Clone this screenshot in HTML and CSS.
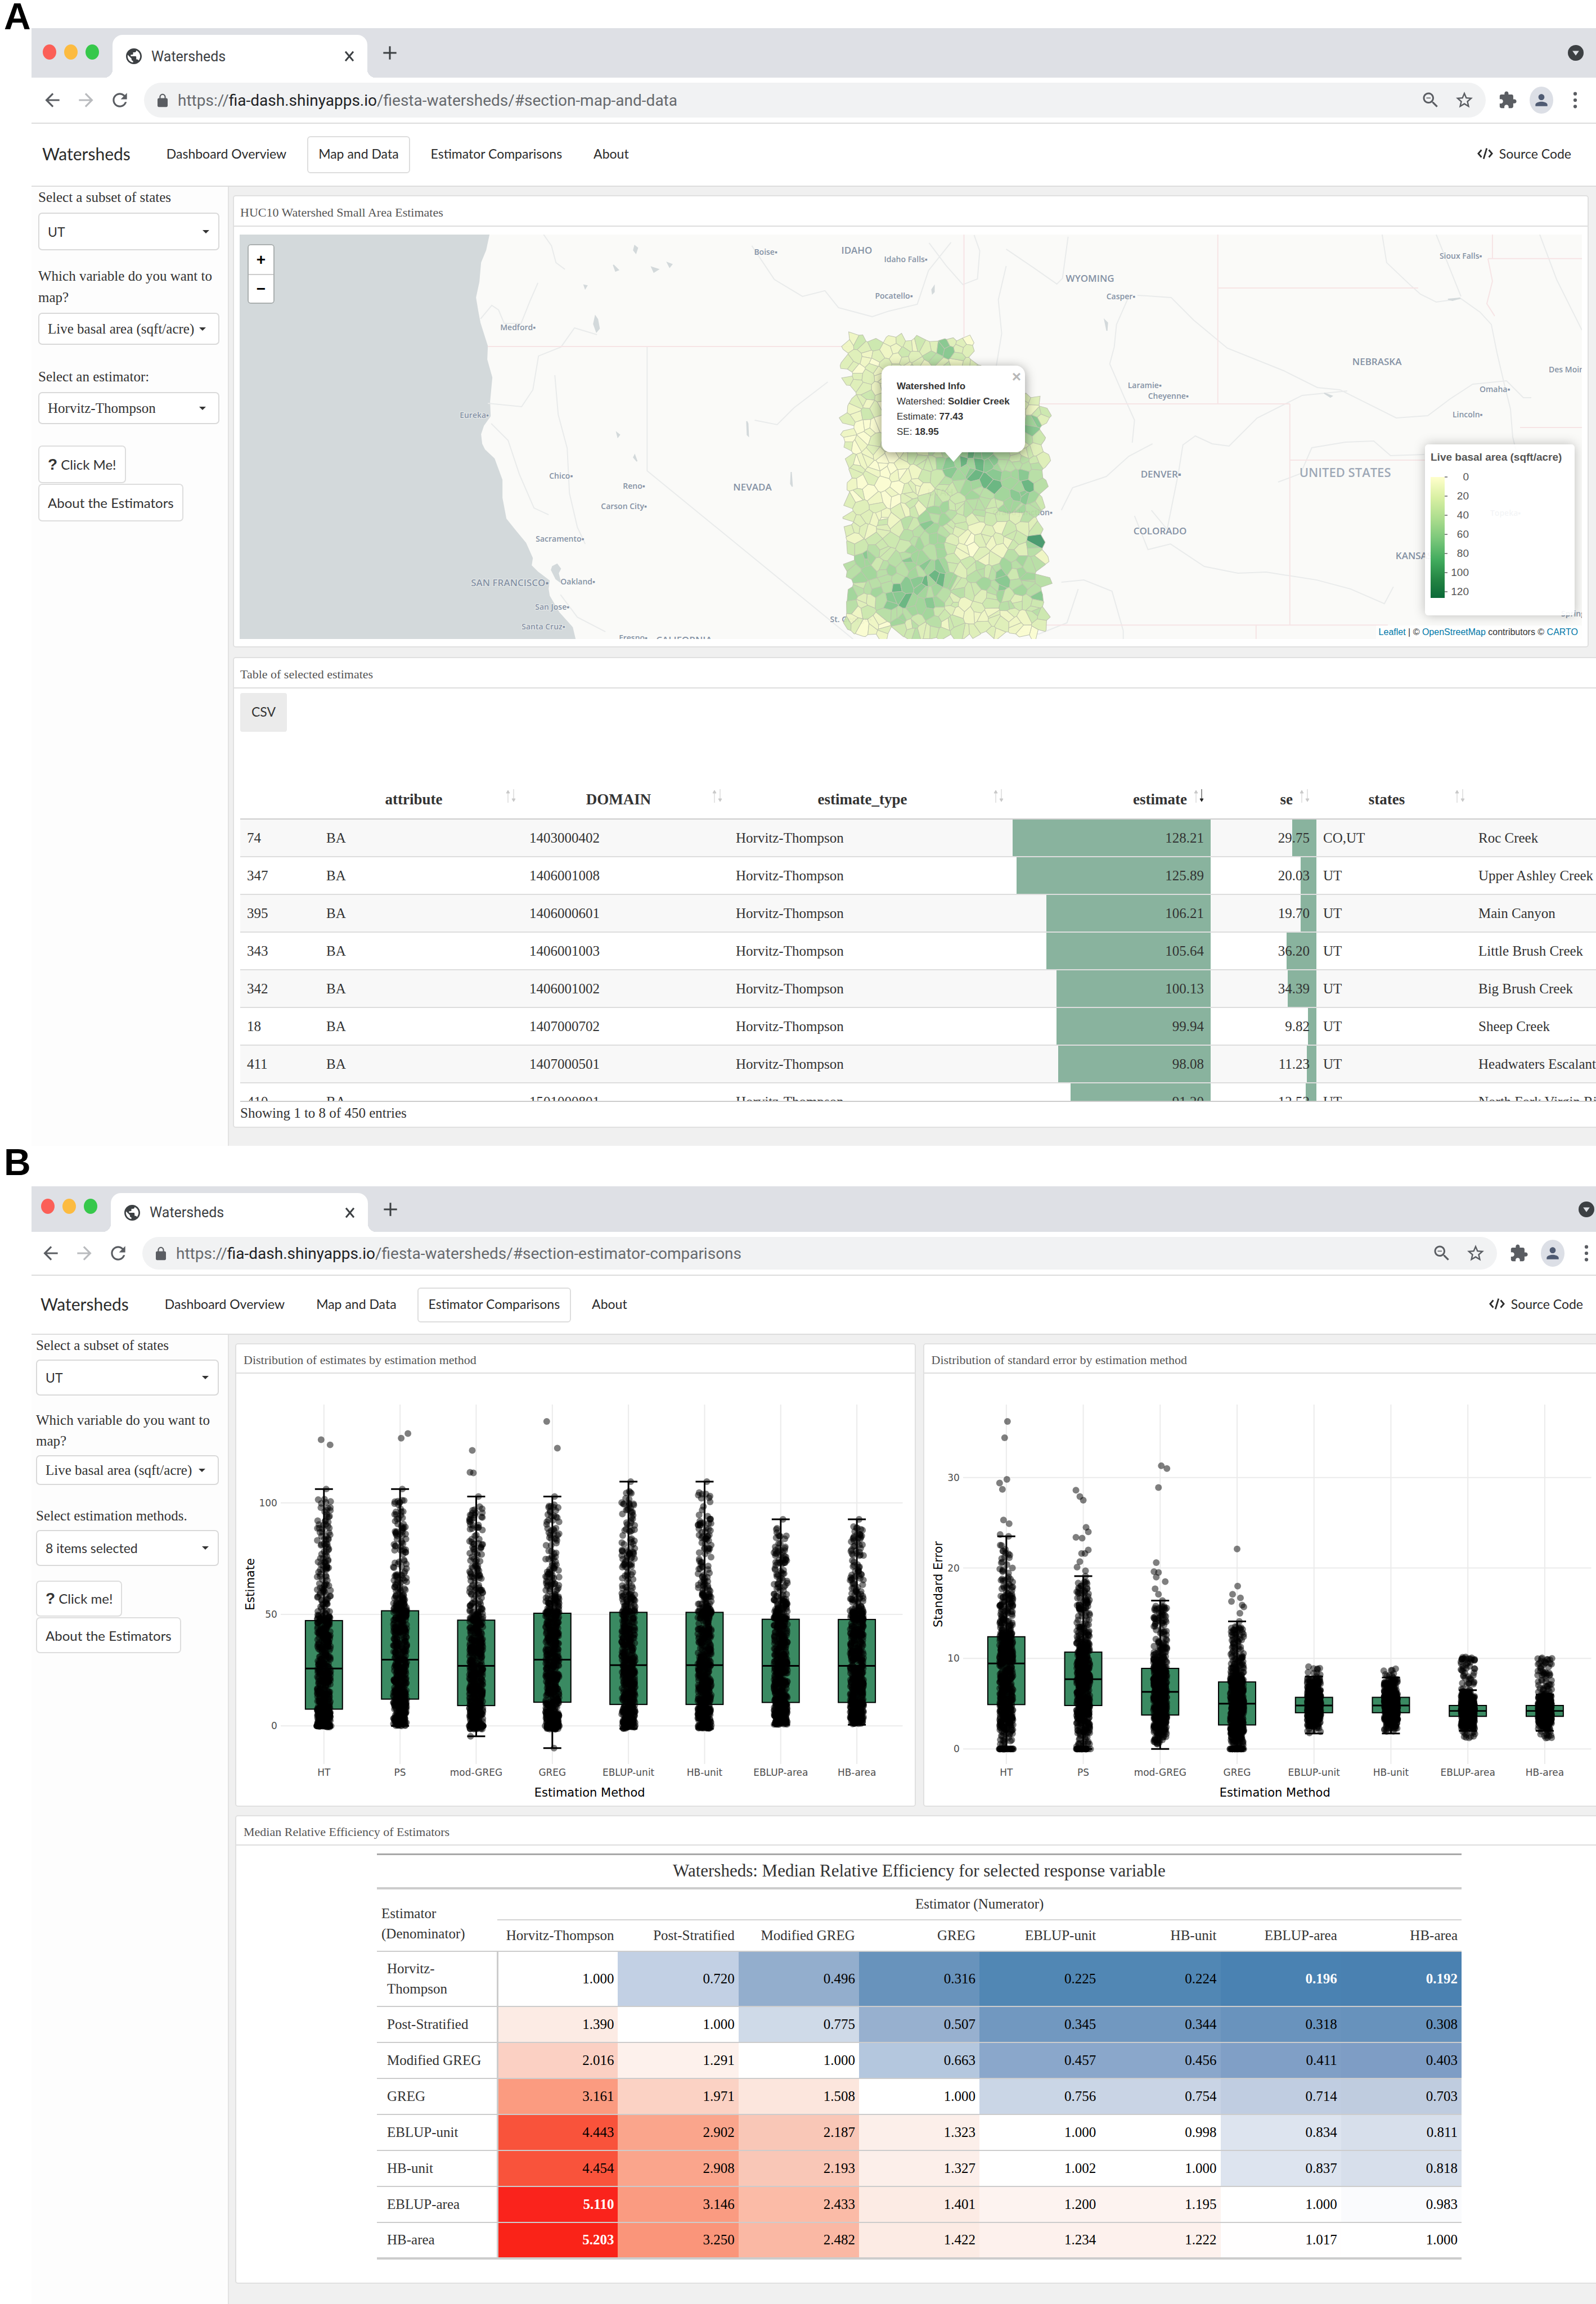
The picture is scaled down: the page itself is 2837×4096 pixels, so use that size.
FILE: index.html
```html
<!DOCTYPE html>
<html lang="en">
<head>
  <meta charset="UTF-8" />
  <meta name="viewport" content="width=device-width, initial-scale=1" />
  <title>Watersheds</title>
  <link rel="stylesheet" href="styles.css">
</head>
<body>
  <svg class="sprite" aria-hidden="true">
    <symbol id="i-globe" viewBox="2 2 20 20"><path d="M12 2C6.48 2 2 6.48 2 12s4.48 10 10 10 10-4.48 10-10S17.52 2 12 2zm-1 17.93c-3.95-.49-7-3.85-7-7.93 0-.62.08-1.21.21-1.79L9 15v1c0 1.1.9 2 2 2v1.93zm6.9-2.54c-.26-.81-1-1.39-1.9-1.39h-1v-3c0-.55-.45-1-1-1H8v-2h2c.55 0 1-.45 1-1V7h2c1.1 0 2-.9 2-2v-.41c2.93 1.19 5 4.06 5 7.41 0 2.08-.8 3.97-2.1 5.39z"/></symbol>
    <symbol id="i-close" viewBox="0 0 24 24"><path d="M6 5l12 14M18 5L6 19" fill="none" stroke="currentColor" stroke-width="2.6"/></symbol>
    <symbol id="i-plus" viewBox="0 0 24 24"><path d="M12 2v20M2 12h20" fill="none" stroke="currentColor" stroke-width="2.6"/></symbol>
    <symbol id="i-down" viewBox="0 0 24 24"><circle cx="12" cy="12" r="12"/><path d="M7 9h10l-5 7z" fill="#dee1e6"/></symbol>
    <symbol id="i-back" viewBox="0 0 24 24"><path d="M20 11H7.83l5.59-5.59L12 4l-8 8 8 8 1.41-1.41L7.83 13H20v-2z"/></symbol>
    <symbol id="i-forward" viewBox="0 0 24 24"><path d="M12 4l-1.41 1.41L16.17 11H4v2h12.17l-5.58 5.59L12 20l8-8z"/></symbol>
    <symbol id="i-reload" viewBox="0 0 24 24"><path d="M17.65 6.35C16.2 4.9 14.21 4 12 4c-4.42 0-7.99 3.58-7.99 8s3.57 8 7.99 8c3.73 0 6.84-2.55 7.73-6h-2.08c-.82 2.33-3.04 4-5.65 4-3.31 0-6-2.69-6-6s2.69-6 6-6c1.66 0 3.14.69 4.22 1.78L13 11h7V4l-2.35 2.35z"/></symbol>
    <symbol id="i-lock" viewBox="4 1 16 21"><path d="M18 8h-1V6c0-2.76-2.24-5-5-5S7 3.24 7 6v2H6c-1.1 0-2 .9-2 2v10c0 1.1.9 2 2 2h12c1.1 0 2-.9 2-2V10c0-1.1-.9-2-2-2zm-2.9 0H8.9V6c0-1.71 1.39-3.1 3.1-3.1 1.71 0 3.1 1.39 3.1 3.1v2z"/></symbol>
    <symbol id="i-zoom" viewBox="0 0 24 24"><path d="M15.5 14h-.79l-.28-.27C15.41 12.59 16 11.11 16 9.5 16 5.91 13.09 3 9.5 3S3 5.91 3 9.5 5.91 16 9.5 16c1.61 0 3.09-.59 4.23-1.57l.27.28v.79l5 4.99L20.49 19l-4.99-5zm-6 0C7.01 14 5 11.99 5 9.5S7.01 5 9.5 5 14 7.01 14 9.5 11.99 14 9.5 14zM7 9h5v1H7z"/></symbol>
    <symbol id="i-star" viewBox="0 0 24 24"><path d="M22 9.24l-7.19-.62L12 2 9.19 8.63 2 9.24l5.46 4.73L5.82 21 12 17.27 18.18 21l-1.63-7.03L22 9.24zM12 15.4l-3.76 2.27 1-4.28-3.32-2.88 4.38-.38L12 6.1l1.71 4.04 4.38.38-3.32 2.88 1 4.28L12 15.4z"/></symbol>
    <symbol id="i-puzzle" viewBox="0 0 24 24"><path d="M20.5 11H19V7c0-1.1-.9-2-2-2h-4V3.500C13 2.120 11.880 1 10.500 1S8 2.120 8 3.500V5H4c-1.100 0-1.990.9-1.990 2v3.800H3.500c1.490 0 2.700 1.210 2.700 2.700s-1.210 2.700-2.700 2.700H2V20c0 1.100.9 2 2 2h3.800v-1.500c0-1.490 1.210-2.700 2.700-2.700 1.490 0 2.700 1.210 2.700 2.700V22H17c1.100 0 2-.9 2-2v-4h1.500c1.380 0 2.500-1.120 2.500-2.500S21.880 11 20.500 11z"/></symbol>
    <symbol id="i-person" viewBox="0 0 24 24"><path d="M12 12c2.21 0 4-1.790 4-4s-1.790-4-4-4-4 1.790-4 4 1.790 4 4 4zm0 2c-2.670 0-8 1.340-8 4v2h16v-2c0-2.660-5.330-4-8-4z"/></symbol>
    <symbol id="i-dots" viewBox="0 0 24 24"><circle cx="12" cy="4" r="2.200"/><circle cx="12" cy="12" r="2.200"/><circle cx="12" cy="20" r="2.200"/></symbol>
    <symbol id="i-code" viewBox="0 0 30 24"><path d="M8 5L2 12l6 7M22 5l6 7-6 7M18 2l-6 20" fill="none" stroke="currentColor" stroke-width="3"/></symbol>
    <symbol id="i-sort" viewBox="0 0 20 24"><path d="M5 24V2M2 7l3-5 3 5z" stroke="#c9c9c9" fill="#c9c9c9"/><path class="desc" d="M15 0v22M12 17l3 5 3-5z" stroke="currentColor" fill="currentColor"/></symbol>
  </svg>

  <section class="figure figure-a">
    <h2 class="letter">A</h2>
    <div class="browser">
      <div class="tabs">
        <span class="dot red"></span><span class="dot yellow"></span><span class="dot green"></span>
        <div class="tab">
          <svg class="icon globe"><use href="#i-globe"/></svg>
          <span class="tab-title">Watersheds</span>
          <button class="plain" aria-label="Close tab"><svg class="icon small"><use href="#i-close"/></svg></button>
        </div>
        <button class="plain new-tab" aria-label="New tab"><svg class="icon small"><use href="#i-plus"/></svg></button>
        <svg class="icon down"><use href="#i-down"/></svg>
      </div>
      <div class="toolbar">
        <svg class="icon"><use href="#i-back"/></svg>
        <svg class="icon off"><use href="#i-forward"/></svg>
        <svg class="icon"><use href="#i-reload"/></svg>
        <div class="omnibox">
          <svg class="icon lock"><use href="#i-lock"/></svg>
          <a class="url" href="#">https://<b>fia-dash.shinyapps.io</b>/fiesta-watersheds/#section-map-and-data</a>
          <svg class="icon glass"><use href="#i-zoom"/></svg>
          <svg class="icon star"><use href="#i-star"/></svg>
        </div>
        <svg class="icon puzzle"><use href="#i-puzzle"/></svg>
        <span class="avatar"><svg class="icon"><use href="#i-person"/></svg></span>
        <svg class="icon menu"><use href="#i-dots"/></svg>
      </div>
      <nav class="navbar">
        <a class="brand" href="#">Watersheds</a>
        <a href="#">Dashboard Overview</a>
        <a class="active" href="#">Map and Data</a>
        <a href="#">Estimator Comparisons</a>
        <a href="#">About</a>
        <a class="source" href="#"><svg class="icon code"><use href="#i-code"/></svg>Source Code</a>
      </nav>
      <div class="page">
        <aside class="sidebar">
          <label for="states-a">Select a subset of states</label>
          <div class="picker tall"><select id="states-a"><option>UT</option></select></div>
          <label for="var-a">Which variable do you want to map?</label>
          <div class="picker serif"><select id="var-a"><option>Live basal area (sqft/acre)</option></select></div>
          <label class="far" for="est-a">Select an estimator:</label>
          <div class="picker serif"><select id="est-a"><option>Horvitz-Thompson</option></select></div>
          <button class="btn first"><b>?</b> Click Me!</button>
          <button class="btn">About the Estimators</button>
        </aside>
        <main class="content">
          <div class="panel map-panel">
            <h3>HUC10 Watershed Small Area Estimates</h3>
            <div class="map">
              <svg id="map" viewBox="0 0 2385 719" preserveAspectRatio="xMidYMid slice"></svg>
              <div class="zoom"><button>+</button><button>−</button></div>
              <div class="popup">
                <button class="plain popup-close" aria-label="Close popup">×</button>
                <b>Watershed Info</b><br>Watershed: <b>Soldier Creek</b><br>Estimate: <b>77.43</b><br>SE: <b>18.95</b>
              </div>
              <div class="legend">
                <b>Live basal area (sqft/acre)</b>
                <div class="scale">
                  <div class="ramp"></div>
                  <ul><li>0</li><li>20</li><li>40</li><li>60</li><li>80</li><li>100</li><li>120</li></ul>
                </div>
              </div>
              <div class="credits"><a href="#">Leaflet</a> | © <a href="#">OpenStreetMap</a> contributors © <a href="#">CARTO</a></div>
            </div>
          </div>
          <div class="panel table-panel">
            <h3>Table of selected estimates</h3>
            <button class="csv">CSV</button>
            <div class="scroll">
              <table class="estimates">
                <colgroup><col class="c-id"><col class="c-attr"><col class="c-dom"><col class="c-type"><col class="c-est"><col class="c-se"><col class="c-st"><col class="c-name"></colgroup>
                <thead>
                  <tr>
                    <th></th>
                    <th>attribute<svg class="sort"><use href="#i-sort"/></svg></th>
                    <th>DOMAIN<svg class="sort"><use href="#i-sort"/></svg></th>
                    <th>estimate_type<svg class="sort"><use href="#i-sort"/></svg></th>
                    <th class="num">estimate<svg class="sort on"><use href="#i-sort"/></svg></th>
                    <th class="num">se<svg class="sort"><use href="#i-sort"/></svg></th>
                    <th>states<svg class="sort"><use href="#i-sort"/></svg></th>
                    <th></th>
                  </tr>
                </thead>
                <tbody id="estimates"></tbody>
              </table>
            </div>
            <p class="info">Showing 1 to 8 of 450 entries</p>
          </div>
        </main>
      </div>
    </div>
  </section>

  <section class="figure figure-b">
    <h2 class="letter">B</h2>
    <div class="browser">
      <div class="tabs">
        <span class="dot red"></span><span class="dot yellow"></span><span class="dot green"></span>
        <div class="tab">
          <svg class="icon globe"><use href="#i-globe"/></svg>
          <span class="tab-title">Watersheds</span>
          <button class="plain" aria-label="Close tab"><svg class="icon small"><use href="#i-close"/></svg></button>
        </div>
        <button class="plain new-tab" aria-label="New tab"><svg class="icon small"><use href="#i-plus"/></svg></button>
        <svg class="icon down"><use href="#i-down"/></svg>
      </div>
      <div class="toolbar">
        <svg class="icon"><use href="#i-back"/></svg>
        <svg class="icon off"><use href="#i-forward"/></svg>
        <svg class="icon"><use href="#i-reload"/></svg>
        <div class="omnibox">
          <svg class="icon lock"><use href="#i-lock"/></svg>
          <a class="url" href="#">https://<b>fia-dash.shinyapps.io</b>/fiesta-watersheds/#section-estimator-comparisons</a>
          <svg class="icon glass"><use href="#i-zoom"/></svg>
          <svg class="icon star"><use href="#i-star"/></svg>
        </div>
        <svg class="icon puzzle"><use href="#i-puzzle"/></svg>
        <span class="avatar"><svg class="icon"><use href="#i-person"/></svg></span>
        <svg class="icon menu"><use href="#i-dots"/></svg>
      </div>
      <nav class="navbar">
        <a class="brand" href="#">Watersheds</a>
        <a href="#">Dashboard Overview</a>
        <a href="#">Map and Data</a>
        <a class="active" href="#">Estimator Comparisons</a>
        <a href="#">About</a>
        <a class="source" href="#"><svg class="icon code"><use href="#i-code"/></svg>Source Code</a>
      </nav>
      <div class="page">
        <aside class="sidebar">
          <label for="states-b">Select a subset of states</label>
          <div class="picker tall"><select id="states-b"><option>UT</option></select></div>
          <label for="var-b">Which variable do you want to map?</label>
          <div class="picker serif"><select id="var-b"><option>Live basal area (sqft/acre)</option></select></div>
          <label class="far" for="est-b">Select estimation methods.</label>
          <div class="picker tall"><select id="est-b"><option>8 items selected</option></select></div>
          <button class="btn first"><b>?</b> Click me!</button>
          <button class="btn">About the Estimators</button>
        </aside>
        <main class="content">
          <div class="plots">
            <div class="panel">
              <h3>Distribution of estimates by estimation method</h3>
              <svg id="plot-est" class="plot" viewBox="0 0 1207 769"></svg>
            </div>
            <div class="panel">
              <h3>Distribution of standard error by estimation method</h3>
              <svg id="plot-se" class="plot" viewBox="0 0 1207 769"></svg>
            </div>
          </div>
          <div class="panel median-panel">
            <h3>Median Relative Efficiency of Estimators</h3>
            <table class="median">
              <thead>
                <tr class="heading"><th colspan="9">Watersheds: Median Relative Efficiency for selected response variable</th></tr>
                <tr class="spanner"><th class="stub" rowspan="2">Estimator (Denominator)</th><th class="span" colspan="8">Estimator (Numerator)</th></tr>
                <tr class="cols"><th>Horvitz-Thompson</th><th>Post-Stratified</th><th>Modified GREG</th><th>GREG</th><th>EBLUP-unit</th><th>HB-unit</th><th>EBLUP-area</th><th>HB-area</th></tr>
              </thead>
              <tbody id="median"></tbody>
            </table>
          </div>
        </main>
      </div>
    </div>
  </section>
  <script src="script.js"></script>
</body>
</html>
```

FILE: styles.css
```css
* {
  box-sizing: border-box;
}
body {
  margin: 0;
  background: #fff;
  color: #333;
  font-family: "Liberation Serif", serif;
  font-size: 25px;
  overflow-x: hidden;
}
a {
  color: inherit;
  text-decoration: none;
}
button, select {
  font: inherit;
  color: inherit;
}
.sprite {
  position: absolute;
  width: 0;
  height: 0;
}
.icon {
  width: 38px;
  height: 38px;
  fill: currentColor;
  flex: none;
}
.plain {
  display: flex;
  padding: 0;
  border: 0;
  background: none;
}

/* figure frame */
.figure {
  padding-left: 56px;
  --tabs-h: 88px;
  --toolbar-h: 82px;
  --pill-h: 62px;
  --navbar-h: 112px;
  --link-h: 66px;
  --tall-h: 67px;
  --short-h: 57px;
  --line: 38px;
}
.figure-b {
  --tabs-h: 81px;
  --toolbar-h: 78px;
  --pill-h: 58px;
  --navbar-h: 105px;
  --link-h: 62px;
  --tall-h: 64px;
  --short-h: 53px;
  --line: 37px;
}
.letter {
  margin: 0 0 0 -49px;
  height: 50px;
  font: bold 66px/58px "Liberation Sans", sans-serif;
  color: #000;
}
.figure-b .letter {
  height: 72px;
}
.browser {
  overflow: hidden;
}

/* browser chrome */
.tabs {
  display: flex;
  align-items: center;
  height: var(--tabs-h);
  padding: 0 22px 0 20px;
  background: #dee0e5;
  color: #3c4043;
}
.figure-b .tabs {
  padding: 0 3px 0 17px;
}
.dot {
  width: 24px;
  height: 27px;
  margin: 0 14px 4px 0;
  border-radius: 50%;
}
.figure-b .dot {
  margin-bottom: 10px;
}
.red { background: #fb5f57; }
.yellow { background: #fcbb40; }
.green { background: #36c84b; }
.tab {
  position: relative;
  display: flex;
  align-items: center;
  align-self: flex-end;
  width: 453px;
  height: calc(var(--tabs-h) - 12px);
  margin-left: 10px;
  padding: 0 18px 0 24px;
  border-radius: 18px 18px 0 0;
  background: #fff;
}
.figure-b .tab {
  width: 457px;
}
.tab::before, .tab::after {
  content: "";
  position: absolute;
  bottom: 0;
  width: 14px;
  height: 14px;
}
.tab::before {
  right: 100%;
  background: radial-gradient(circle at 0 0, #dee0e5 14px, #fff 14px);
}
.tab::after {
  left: 100%;
  background: radial-gradient(circle at 100% 0, #dee0e5 14px, #fff 14px);
}
.tab-title {
  flex: 1;
  margin-left: 17px;
  font: 25px "Roboto", sans-serif;
}
.globe {
  width: 28px;
  height: 30px;
}
.small {
  width: 28px;
  height: 28px;
}
.new-tab {
  margin-left: 26px;
}
.down {
  width: 28px;
  height: 30px;
  margin-left: auto;
}
.toolbar {
  display: flex;
  align-items: center;
  gap: 22px;
  height: var(--toolbar-h);
  padding: 0 20px 0 18px;
  border-bottom: 2px solid #dcdcdc;
  color: #5a5d62;
}
.figure-b .toolbar {
  padding: 0 0 0 15px;
}
.off {
  color: #b9bbbe;
}
.omnibox {
  flex: 1;
  display: flex;
  align-items: center;
  gap: 24px;
  height: var(--pill-h);
  margin-left: 2px;
  padding: 0 20px 0 24px;
  border-radius: 31px;
  background: #f1f2f3;
}
.url {
  flex: 1;
  font: 28px "Roboto", sans-serif;
  color: #66696d;
  white-space: nowrap;
}
.url b {
  font-weight: normal;
  color: #202124;
}
.lock {
  width: 18px;
  height: 27px;
  margin-right: -6px;
}
.glass, .star {
  width: 36px;
  height: 36px;
}
.puzzle, .menu {
  width: 34px;
  height: 34px;
}
.avatar {
  display: flex;
  align-items: center;
  justify-content: center;
  width: 42px;
  height: 48px;
  border-radius: 50%;
  background: #dcdfe6;
  color: #4f5b73;
}
.avatar .icon {
  width: 32px;
}

/* dashboard navbar */
.navbar {
  display: flex;
  align-items: center;
  gap: 18px;
  height: var(--navbar-h);
  padding: 0 25px 0 18px;
  border-bottom: 2px solid #ddd;
  font: 23px "Lato", sans-serif;
  color: #2b2b2b;
}
.figure-b .navbar {
  padding: 0 4px 0 15px;
}
.navbar a {
  display: flex;
  align-items: center;
  height: var(--link-h);
  padding: 0 18px 4px;
  border: 1px solid transparent;
  border-radius: 6px;
}
.navbar .brand {
  padding: 0 26px 4px 0;
  font-size: 30px;
}
.navbar .active {
  border: 2px solid #ddd;
}
.navbar .source {
  margin-left: auto;
}
.code {
  width: 28px;
  height: 26px;
  margin-right: 11px;
}

/* sidebar */
.page {
  display: flex;
}
.sidebar {
  flex: none;
  width: 349px;
  padding: 0 15px 0 12px;
  background: #fdfdfd;
  line-height: var(--line);
}
.figure-b .sidebar {
  padding: 0 16px 0 8px;
}
.sidebar label {
  display: block;
}
.sidebar label + .picker {
  margin: 8px 0 27px;
}
.figure-b .sidebar label + .picker {
  margin: 7px 0 25px;
}
.sidebar .far {
  padding-top: 11px;
}
.picker {
  position: relative;
  height: var(--short-h);
  font-family: "Lato", sans-serif;
  font-size: 23px;
}
.picker.serif {
  font-family: "Liberation Serif", serif;
  font-size: 25px;
}
.picker.tall {
  height: var(--tall-h);
}
.picker::after {
  content: "";
  position: absolute;
  top: 46%;
  right: 18px;
  border: 6px solid transparent;
  border-top-color: #333;
}
.picker.serif::after {
  right: 24px;
}
.picker select {
  appearance: none;
  width: 100%;
  height: 100%;
  padding: 0 15px;
  border: 2px solid #d9d9d9;
  border-radius: 7px;
  background: #fff;
}
.btn {
  display: block;
  height: var(--tall-h);
  margin-bottom: 1px;
  padding: 0 15px;
  border: 2px solid #ddd;
  border-radius: 7px;
  background: #fff;
  font: 24px "Lato", sans-serif;
}
.btn.first {
  margin-top: 38px;
}
.figure-b .btn.first {
  margin-top: 26px;
}
.btn b {
  font: bold 28px "Liberation Sans", sans-serif;
}

/* panels */
.content {
  flex: 1;
  min-width: 0;
  padding: 15px 0 0 7px;
  border-left: 2px solid #e2e2e2;
  background: #f0f0f0;
}
.figure-b .content {
  padding: 15px 0 41px 11px;
}
.panel {
  border: 2px solid #e0e0e0;
  border-radius: 5px;
  background: #fff;
}
.panel h3 {
  margin: 0;
  padding: 5px 0 0 11px;
  border-bottom: 2px solid #ddd;
  font-size: 22px;
  font-weight: normal;
  line-height: 47px;
  color: #555;
}
.figure-b .panel h3 {
  line-height: 45px;
  padding-left: 13px;
}
.map-panel {
  margin-right: 13px;
}
.map {
  position: relative;
  height: 719px;
  margin: 14px 10px 13px;
  overflow: hidden;
  background: #fafaf8;
  font-family: "Liberation Sans", sans-serif;
}
.map > svg {
  display: block;
  width: 100%;
  height: 100%;
}
.map text {
  font-family: "Open Sans", sans-serif;
  font-weight: 600;
  fill: #8592a5;
  paint-order: stroke;
  stroke: rgba(250,250,248,0.6);
  stroke-width: 2px;
}
.zoom {
  position: absolute;
  top: 17px;
  left: 14px;
  width: 48px;
  border: 2px solid #aaafaf;
  border-radius: 6px;
  overflow: hidden;
}
.zoom button {
  display: block;
  width: 100%;
  height: 51px;
  padding: 0;
  border: 0;
  background: #fff;
  font: bold 28px/48px "Liberation Sans", sans-serif;
  color: #000;
}
.zoom button + button {
  border-top: 2px solid #ccc;
}
.popup {
  position: absolute;
  top: 233px;
  left: 1141px;
  width: 255px;
  height: 154px;
  padding: 23px 0 0 27px;
  border-radius: 16px;
  background: #fff;
  box-shadow: 0 4px 20px rgba(0,0,0,0.4);
  font-size: 17px;
  line-height: 27px;
  color: #333;
}
.popup::after {
  content: "";
  position: absolute;
  top: 100%;
  left: 113px;
  border: 15px solid transparent;
  border-top: 17px solid #fff;
}
.popup-close {
  position: absolute;
  top: 6px;
  right: 7px;
  font: bold 28px/28px "Liberation Sans", sans-serif;
  color: #b8b8b8;
}
.legend {
  position: absolute;
  top: 373px;
  right: 13px;
  width: 266px;
  height: 304px;
  padding: 12px 10px;
  border-radius: 6px;
  background: rgba(255,255,255,0.9);
  box-shadow: 0 0 20px rgba(0,0,0,0.25);
  font-size: 19px;
  color: #555;
  white-space: nowrap;
}
.scale {
  display: flex;
  margin-top: 24px;
}
.ramp {
  width: 25px;
  height: 215px;
  background: linear-gradient(#ffffcc, #d9f0a3 17%, #addd8e 34%, #78c679 52%, #41ab5d 69%, #238443 85%, #0b6937);
}
.scale ul {
  margin: -17px 0 0;
  padding: 0;
  list-style: none;
  width: 43px;
  text-align: right;
  line-height: 34px;
}
.scale li {
  background: linear-gradient(#888, #888) left center / 5px 2px no-repeat;
}
.credits {
  position: absolute;
  right: 0;
  bottom: 0;
  padding: 0 7px 0 5px;
  background: rgba(255,255,255,0.7);
  font-size: 16px;
  line-height: 24px;
}
.credits a {
  color: #0078a8;
}

/* estimates table */
.table-panel {
  margin: 17px -20px 32px 0;
  padding-left: 11px;
}
.table-panel h3 {
  margin-left: -11px;
}
.csv {
  display: block;
  width: 83px;
  height: 69px;
  margin: 8px 0 86px;
  padding: 0 0 4px;
  border: 0;
  border-radius: 4px;
  background: #ebebeb;
  font: 23px "Lato", sans-serif;
}
.scroll {
  height: 572px;
  overflow: hidden;
  border-bottom: 2px solid #ccc;
}
.estimates {
  table-layout: fixed;
  width: 2600px;
  border-collapse: separate;
  border-spacing: 0;
}
.c-id { width: 141px; }
.c-attr { width: 361px; }
.c-dom { width: 367px; }
.c-type { width: 500px; }
.c-est { width: 356px; }
.c-se { width: 188px; }
.c-st { width: 276px; }
.estimates th {
  position: relative;
  height: 70px;
  padding: 0 39px 0 13px;
  border-bottom: 2px solid #ccc;
  font-size: 27px;
}
.estimates th.num {
  padding-right: 42px;
  text-align: right;
}
.sort {
  position: absolute;
  top: 16px;
  right: 11px;
  width: 20px;
  height: 24px;
  color: #c9c9c9;
}
.sort.on {
  color: #222;
}
.estimates td {
  height: 67px;
  padding: 0 12px;
  border-bottom: 2px solid #ddd;
  white-space: nowrap;
}
.estimates tr:nth-child(odd) td {
  background-color: #f8f8f8;
}
.estimates .bar {
  text-align: right;
  background-image: linear-gradient(to left, #89b39e var(--w), transparent var(--w));
  background-clip: padding-box;
}
.info {
  margin: 0;
  padding-bottom: 4px;
  line-height: 40px;
}

/* box plots */
.plots {
  display: grid;
  grid-template-columns: 1fr 1fr;
  gap: 13px;
  margin: 0 -13px 15px 0;
}
.plot {
  display: block;
  width: 100%;
}
.plot text {
  font-family: "DejaVu Sans", sans-serif;
  font-size: 17px;
  fill: #4d4d4d;
  text-anchor: middle;
}
.plot .axis-title {
  font-size: 21px;
  fill: #000;
}
.plot .tick {
  text-anchor: end;
}

/* median efficiency table */
.median-panel {
  margin-right: -13px;
  padding-bottom: 41px;
}
.median {
  table-layout: fixed;
  width: calc(100% - 500px);
  margin: 14px auto 0;
  border-collapse: collapse;
  border-top: 3px solid #a8a8a8;
  border-bottom: 4px solid #ccc;
}
.median th {
  font-weight: normal;
}
.median .heading th {
  height: 60px;
  border-bottom: 4px solid #ccc;
  font-size: 31px;
}
.median .spanner th {
  height: 56px;
}
.median .span {
  border-bottom: 2px solid #d3d3d3;
}
.median .stub {
  padding: 14px 8px 0;
  text-align: left;
  line-height: 36px;
}
.median .cols th {
  height: 56px;
  padding: 0 7px;
  text-align: right;
}
.median td, .median tbody th {
  height: 64px;
  padding: 0 7px;
  border-top: 2px solid #ccc;
  text-align: right;
  color: #000;
}
.median tbody th {
  padding-left: 18px;
  border-right: 3px solid #ccc;
  text-align: left;
  line-height: 36px;
  color: #333;
}
.median tbody tr:first-child td {
  height: 98px;
}
.median .strong {
  font-weight: bold;
  color: #fff;
}
```

FILE: script.js
```js
// seeded random so the jitter stays the same on each load
let seed = 7;
function rnd() {
  seed = (seed * 16807) % 2147483647;
  return seed / 2147483647;
}

// ---- table of estimates ----
const rows = [
  [74, '1403000402', '128.21', '29.75', 'CO,UT', 'Roc Creek', 99, 23],
  [347, '1406001008', '125.89', '20.03', 'UT', 'Upper Ashley Creek', 97, 15],
  [395, '1406000601', '106.21', '19.70', 'UT', 'Main Canyon', 82, 15],
  [343, '1406001003', '105.64', '36.20', 'UT', 'Little Brush Creek', 82, 28],
  [342, '1406001002', '100.13', '34.39', 'UT', 'Big Brush Creek', 77, 27],
  [18, '1407000702', '99.94', '9.82', 'UT', 'Sheep Creek', 77, 8],
  [411, '1407000501', '98.08', '11.23', 'UT', 'Headwaters Escalante River', 76, 9],
  [410, '1501000801', '91.20', '12.52', 'UT', 'North Fork Virgin River', 70, 10]
];
document.getElementById('estimates').innerHTML = rows.map(r =>
  `<tr><td>${r[0]}</td><td>BA</td><td>${r[1]}</td><td>Horvitz-Thompson</td>` +
  `<td class="bar" style="--w:${r[6]}%">${r[2]}</td><td class="bar" style="--w:${r[7]}%">${r[3]}</td>` +
  `<td>${r[4]}</td><td>${r[5]}</td></tr>`).join('');

// ---- median relative efficiency ----
const median = [
  ['Horvitz-Thompson', '1.000 #fff', '0.720 #c2d0e4', '0.496 #93aecd', '0.316 #6893bc', '0.225 #5187b4', '0.224 #5187b4', '0.196 #4a82b2', '0.192 #4a81b1'],
  ['Post-Stratified', '1.390 #fcebe4', '1.000 #fff', '0.775 #cfdae8', '0.507 #97b0cf', '0.345 #7198c0', '0.344 #7198c0', '0.318 #6993bd', '0.308 #6792bc'],
  ['Modified GREG', '2.016 #fbd0c3', '1.291 #fdf1ec', '1.000 #fff', '0.663 #b4c7de', '0.457 #8aa7cb', '0.456 #8aa7cb', '0.411 #809fc6', '0.403 #7e9dc5'],
  ['GREG', '3.161 #fb9b80', '1.971 #fbd2c4', '1.508 #fce6dd', '1.000 #fff', '0.756 #cad6e6', '0.754 #c9d4e5', '0.714 #c0cde1', '0.703 #bfccdf'],
  ['EBLUP-unit', '4.443 #f9533b', '2.902 #faa58c', '2.187 #f9c7b7', '1.323 #fcefea', '1.000 #fff', '0.998 #fff', '0.834 #dde4ef', '0.811 #d7dfeb'],
  ['HB-unit', '4.454 #f9533b', '2.908 #faa58c', '2.193 #f9c7b7', '1.327 #fcefea', '1.002 #fff', '1.000 #fff', '0.837 #dde4ef', '0.818 #d7dfeb'],
  ['EBLUP-area', '5.110 #fa231c', '3.146 #fa9b81', '2.433 #fbbba7', '1.401 #fcebe4', '1.200 #fdf3f0', '1.195 #fdf3f0', '1.000 #fff', '0.983 #fafbfd'],
  ['HB-area', '5.203 #fa2318', '3.250 #fa957a', '2.482 #fab8a4', '1.422 #fcebe4', '1.234 #fdf1ed', '1.222 #fdf1ed', '1.017 #fffefe', '1.000 #fff']
];
document.getElementById('median').innerHTML = median.map(r =>
  `<tr><th>${r[0]}</th>` + r.slice(1).map(c => {
    const [v, color] = c.split(' ');
    const strong = v > 5 || v < 0.2 ? ' class="strong"' : '';
    return `<td${strong} style="background:${color}">${v}</td>`;
  }).join('') + '</tr>').join('');

// ---- box plots ----
const methods = ['HT', 'PS', 'mod-GREG', 'GREG', 'EBLUP-unit', 'HB-unit', 'EBLUP-area', 'HB-area'];

function boxPlot(id, o) {
  const y = v => o.zero - v * o.unit;
  let s = '';
  for (const t of o.ticks) {
    s += `<path d="M${o.left} ${y(t)}H${o.right}" stroke="#ebebeb" stroke-width="2"/>`;
    s += `<text class="tick" x="${o.left - 6}" y="${y(t) + 6}">${t}</text>`;
  }
  methods.forEach((m, i) => {
    const x = o.x0 + i * o.dx;
    const [lo, q1, med, q3, hi] = o.boxes[i];
    s += `<path d="M${x} 55V695" stroke="#ebebeb" stroke-width="2"/>`;
    s += `<rect x="${x - 33}" y="${y(q3)}" width="66" height="${y(q1) - y(q3)}" fill="#3a8a62" stroke="#000" stroke-width="2"/>`;
    s += `<path d="M${x - 33} ${y(med)}h66M${x} ${y(q3)}V${y(hi)}M${x} ${y(q1)}V${y(lo)}M${x - 16} ${y(hi)}h32M${x - 16} ${y(lo)}h32" stroke="#000" stroke-width="3"/>`;
    let dots = '';
    const dot = (dx, v) => { dots += `<circle cx="${x + dx}" cy="${y(v)}" r="6"/>`; };
    // the lower edge of the cloud stays above the zero pile
    const floor = Math.max(lo, o.floor);
    for (let k = 0; k < 600; k++) {
      const q = k % 4, r = rnd();
      let v;
      if (q === 0) v = floor + (q1 - floor) * (q1 > 7 ? r : Math.sqrt(r));
      if (q === 1) v = q1 + (med - q1) * r;
      if (q === 2) v = med + (q3 - med) * r;
      if (q === 3) v = q3 + (hi - q3) * Math.pow(r, 1.8) * 0.93;
      dot((rnd() - 0.5) * 24, v);
    }
    if (o.zeros[i]) for (let k = 0; k < 30; k++) dot((rnd() - 0.5) * 26, 0);
    dot(4, hi);
    for (const [dx, v] of o.out[i]) dot(dx, v);
    s += `<g fill-opacity="0.5">${dots}</g>`;
    s += `<text x="${x}" y="716">${m}</text>`;
  });
  s += `<text class="axis-title" x="${o.mid}" y="753">Estimation Method</text>`;
  s += `<text class="axis-title" transform="translate(${o.titleX} 375) rotate(-90)">${o.title}</text>`;
  document.getElementById(id).innerHTML = s;
}

boxPlot('plot-est', {
  title: 'Estimate', titleX: 32, mid: 629, left: 79, right: 1186, x0: 156, dx: 135.5,
  zero: 627, unit: 3.97, ticks: [0, 50, 100], floor: -1.5,
  boxes: [
    [-0.5, 7.5, 25.7, 47.2, 106.2], [0, 12, 29.7, 51.6, 106.2], [-4.7, 9.1, 26.9, 47.4, 102.8], [-10, 10.6, 29.7, 50.5, 102.8],
    [-1.3, 9.6, 27.2, 50.9, 109.5], [-1.3, 9.6, 27.2, 50.9, 109.5], [0.5, 10.5, 26.9, 47.8, 92.6], [0.5, 10.5, 26.9, 47.7, 92.6]
  ],
  zeros: [1, 0, 1, 1, 0, 0, 0, 0],
  out: [
    [[-5, 128.3], [11, 126]], [[2, 129], [14, 131.1]], [[-7, 123.5], [-11, 113.7], [-5, 113.4], [-10, -4.7]], [[-10, 136.5], [9, 124.5], [3, -10]],
    [], [], [], []
  ]
});

// small cloud of outliers beyond the whiskers
function cloud(from, to, n) {
  return Array.from({ length: n }, () => [(rnd() - 0.5) * 26, from + (to - from) * rnd()]);
}
boxPlot('plot-se', {
  title: 'Standard Error', titleX: 32, mid: 624, left: 69, right: 1187, x0: 146, dx: 136.9,
  zero: 668, unit: 16.1, ticks: [0, 10, 20, 30], floor: 0,
  boxes: [
    [0, 4.9, 9.45, 12.4, 23.5], [0, 4.8, 7.7, 10.7, 19.1], [0, 3.75, 6.3, 8.9, 16.4], [0, 2.65, 5, 7.4, 14.1],
    [1.7, 4, 4.8, 5.7, 8], [1.7, 4, 4.8, 5.7, 7.9], [2, 3.6, 4.2, 4.8, 6.5], [2, 3.6, 4.2, 4.8, 6]
  ],
  zeros: [1, 1, 0, 1, 0, 0, 0, 0],
  out: [
    [[2, 36.2], [-3, 34.4], [1, 29.8], [-12, 29.4], [-7, 28.7], [-5, 25.3], [5, 24.9], [-11, 23.7]],
    [[-13, 28.6], [-6, 27.9], [0, 27.5], [5, 24.5], [9, 24], [-13, 23.4], [-2, 23.3], [9, 22], [-3, 21.6], [3, 21.6], [-6, 20.7], [-11, 20.1], [4, 19.7]],
    [[2, 31.3], [12, 31], [-3, 28.9], [-7, 20.6], [-11, 19.6], [-3, 19.5], [-7, 19], [9, 18.5], [-9, 17.7], [-3, 17.1]],
    [[0, 22.1], [1, 18], [-8, 17.1], [6, 16.7], [-10, 16.3], [9, 15.9], [12, 15.7], [5, 15]],
    cloud(8, 9.1, 9), cloud(8, 9.1, 9), cloud(6.5, 10.2, 50).concat(cloud(1.2, 2, 12)), cloud(6, 10.2, 60).concat(cloud(1.2, 2, 12))
  ]
});

// ---- map ----
const land = 'M444 0L438 28L429 50L426 84L420 112L424 136L428 157L441 198L440 222L449 254L445 297L446 323L434 340L429 355L431 372L436 382L453 398L467 436L467 468L474 505L490 525L509 548L521 575L519 588L530 599L551 615L549 630L551 642L568 671L592 698L597 719H2385V0Z';
const borders = 'M441 199H1090M1287 0V190M1738 0V301M1738 95H2094M1420 301H1866M1866 301V694M1866 401H2106M1400 694H2040M1806 694V719M2226 0V42M2218 43H2385M2218 43l8 40l-10 40l14 22M2275 343H2385';
const rivers = 'M428 150l20 -24l12 8l10 24l30 0l16 -40l14 -32M540 0l14 20l8 30l16 12M441 300l60 6l20 -30l10 -60l40 -16l24 -34l40 12M447 336l30 30l20 60l26 60l26 12M560 250l6 70l16 60l4 80l14 60l14 30M570 640l30 40l50 26M724 199V420L1090 719M910 20l40 60l50 30l40 -10l24 30l60 16l30 -10l50 -12l20 -60l40 -50M1225 15l30 40l30 34l26 -10l4 -50l-10 -28M1362 26l50 34l40 28l10 -10l10 -74M1362 56l-14 60l6 60l-10 60l34 60M1595 108l60 4l40 40l60 50l100 40l60 30l40 4l60 30l40 20l56 -4l40 -30l40 -26l60 -6l30 30h14M1580 110l-22 50l-4 40l-8 30l26 60l18 40l-4 40M1460 490l20 -40l60 -20l40 -36l42 -22M1590 500l24 60l40 -10l60 40l60 12l50 -2l90 14l60 16l60 26l16 -30M1620 490l28 34l20 -100l8 -50l22 -16l30 14l30 4l50 -50l80 -40l80 -8M2030 0l8 50l40 38l20 18l28 14l44 -6l34 24l20 22l10 50l14 60l10 40l4 50l10 40M2126 0l24 60l20 50M2310 0l30 80l30 60l15 30M1845 440l40 -15l20 -46l60 -10l50 -2l30 26l60 -2M1460 618l40 -4l50 20l20 70v15M1360 700l60 10l50 -20l20 -60M915 330l40 8l30 -30l60 -46';
const lakes = 'M632 145l4 6l3 16l-5 6l-5 -14zM901 332l2 4l1 22l-2 -2zM1230 98l4 -6v10l-3 3zM556 590l8 -4l6 8l-4 8l4 16l-8 -6l-8 -16zM702 20l5 4l-3 9l-4 -5zM612 90l5 1l-3 5zM980 422l2 26l-3 -5zM1537 152l5 5l-1 14zM1927 282l14 5l-3 2zM2147 115l22 -2l-14 4zM664 54l9 9l-5 2zM732 58l12 4l-8 5zM670 352l5 4l-3 4zM702 392l4 11l-6 -7zM760 50l8 3l-4 5z';

const states = [[411, 619, 'SAN FRANCISCO▪'], [877, 449, 'NEVADA'], [1069, 28, 'IDAHO'], [1468, 78, 'WYOMING'], [1601, 426, 'DENVER▪'], [1588, 527, 'COLORADO'], [1977, 226, 'NEBRASKA'], [2054, 571, 'KANSAS'], [740, 721, 'CALIFORNIA'], [1222, 458, 'UTAH']];
const cities = [[463, 165, 'Medford'], [391, 321, 'Eureka'], [550, 429, 'Chico'], [526, 541, 'Sacramento'], [570, 617, 'Oakland'], [525, 662, 'San Jose'], [501, 697, 'Santa Cruz'], [681, 447, 'Reno'], [642, 483, 'Carson City'], [674, 717, 'Fresno'], [914, 31, 'Boise'], [1145, 44, 'Idaho Falls'], [1129, 109, 'Pocatello'], [1540, 110, 'Casper'], [1578, 268, 'Laramie'], [1614, 287, 'Cheyenne'], [1338, 494, 'Grand Junction'], [1049, 684, 'St. George'], [2132, 38, 'Sioux Falls'], [2326, 240, 'Des Moines'], [2203, 275, 'Omaha'], [2155, 320, 'Lincoln'], [2222, 495, 'Topeka'], [2348, 674, 'Springfield']];

const ramp = ['#fbfdd0', '#eff6c2', '#deefb6', '#cae7ab', '#b5dea1', '#9dd496', '#82c68b', '#62b37b', '#3f9567'];

// hot spots of basal area: x, y, radius, weight
const spots = [
  [1103, 586, 20, 4], [1242, 605, 18, 3], [1164, 649, 24, 3], [1402, 442, 22, 3], [1408, 345, 14, 4.5], [1263, 408, 22, 3],
  [1322, 398, 24, 3], [1418, 547, 9, 6], [1076, 639, 14, 5], [1242, 509, 20, 2.4], [1360, 610, 26, 2.6], [1424, 639, 24, 3.4],
  [1338, 451, 28, 1.6], [1253, 205, 14, 4], [1205, 570, 50, 2.2], [1290, 430, 60, 1.6], [1390, 480, 50, 1.2], [1350, 640, 50, 1],
  [1080, 300, 20, 2], [1220, 650, 50, 2], [1150, 460, 46, -1.4], [1315, 550, 36, -2], [1110, 240, 50, -0.6], [1140, 350, 50, -1.2], [1395, 690, 30, -1.8], [1290, 670, 26, -2], [1120, 700, 26, -1.4], [1300, 190, 18, -2]
];
function level(x, y) {
  let v = 2 + (rnd() - 0.5) * 2.6;
  for (const [sx, sy, r, w] of spots) v += w * Math.exp(-((x - sx) ** 2 + (y - sy) ** 2) / (2 * r * r));
  return Math.max(0, Math.min(8, Math.round(v)));
}
function inside(x, y) {
  if (y < 184 || y > 712 || x < 1080 || x > 1430) return false;
  return y > 285 || x < 1306;
}
// cut the half of a polygon that is nearer to site b than to site a
function clip(poly, a, b) {
  const mx = (a[0] + b[0]) / 2, my = (a[1] + b[1]) / 2, nx = b[0] - a[0], ny = b[1] - a[1];
  const side = p => (p[0] - mx) * nx + (p[1] - my) * ny;
  const out = [];
  poly.forEach((p, i) => {
    const q = poly[(i + 1) % poly.length], sp = side(p), sq = side(q);
    if (sp <= 0) out.push(p);
    if (sp * sq < 0) {
      const t = sp / (sp - sq);
      out.push([p[0] + (q[0] - p[0]) * t, p[1] + (q[1] - p[1]) * t]);
    }
  });
  return out;
}
function watersheds() {
  const sites = [];
  for (let y = 150; y < 750; y += 19)
    for (let x = 1045; x < 1470; x += 15)
      sites.push([x + (rnd() - 0.5) * 22, y + (rnd() - 0.5) * 28]);
  let s = '';
  for (const a of sites) {
    if (!inside(a[0], a[1])) continue;
    let poly = [[a[0] - 22, a[1] - 22], [a[0] + 22, a[1] - 22], [a[0] + 22, a[1] + 22], [a[0] - 22, a[1] + 22]];
    for (const b of sites) {
      if (b === a || Math.abs(b[0] - a[0]) > 60 || Math.abs(b[1] - a[1]) > 60) continue;
      poly = clip(poly, a, b);
    }
    s += `<path d="M${poly.map(p => p.map(n => n.toFixed(1)).join(' ')).join('L')}Z" fill="${ramp[level(a[0], a[1])]}"/>`;
  }
  return s;
}

document.getElementById('map').innerHTML =
  `<rect width="2385" height="719" fill="#d3d9db"/><path d="${land}" fill="#fafaf8"/>` +
  `<path d="${rivers}" fill="none" stroke="#e9ebeb" stroke-width="2"/><path d="${lakes}" fill="#d3d9db" stroke="#d3d9db" stroke-width="2"/>` +
  `<path d="${borders}" fill="none" stroke="#f6e4e5" stroke-width="2"/>` +
  states.map(([x, y, t]) => `<text x="${x}" y="${y + 6}" font-size="17">${t}</text>`).join('') +
  cities.map(([x, y, t]) => `<text x="${x}" y="${y + 5}" font-size="14">${t}▪</text>`).join('') +
  `<text x="1883" y="431" font-size="22" fill-opacity="0.8">UNITED STATES</text>` +
  `<g stroke="#b9bfa9" stroke-width="1" opacity="0.93">${watersheds()}</g>`;
```
